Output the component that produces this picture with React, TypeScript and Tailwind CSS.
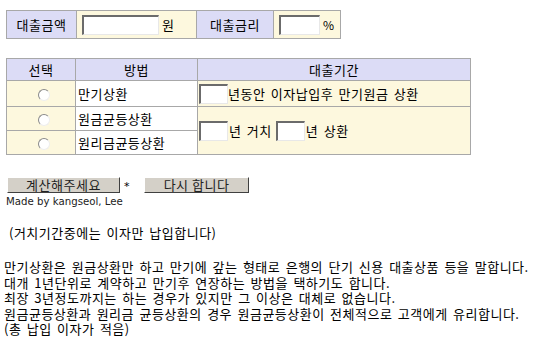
import React from 'react';

function Box({ w, h = 20 }: { w: number; h?: number }) {
  return (
    <span
      className="inline-block align-middle bg-white border-t-2 border-l-2 border-r border-b border-t-[#6b6b6b] border-l-[#6b6b6b] border-r-[#e8e8e8] border-b-[#e8e8e8]"
      style={{ width: w, height: h }}
    />
  );
}

function Radio() {
  return (
    <span className="inline-block w-[12px] h-[12px] ml-[5px] rounded-full bg-white border border-t-[#8a8a8a] border-l-[#8a8a8a] border-r-[#eeeeee] border-b-[#eeeeee] align-middle" />
  );
}

export default function App() {
  return (
    <div className="w-[537px] h-[350px] overflow-hidden bg-white text-black text-[13px] leading-[15px] tracking-[0.5px] [word-spacing:2px] font-['Noto_Sans_CJK_KR',sans-serif]">
      {/* 대출금액 / 대출금리 */}
      <table className="ml-[6px] mt-[10px] border-collapse border border-[#9a9a9a]">
        <tbody>
          <tr className="h-[28px]">
            <td className="w-[70px] bg-[#dcdcf6] text-center border border-[#a8a8a8]">대출금액</td>
            <td className="w-[120px] bg-[#fdf8de] border border-[#a8a8a8] pl-[5px]">
              <div className="flex items-center gap-[3px]">
                <Box w={77} />
                <span>원</span>
              </div>
            </td>
            <td className="w-[77px] bg-[#dcdcf6] text-center border border-[#a8a8a8]">대출금리</td>
            <td className="w-[67px] bg-[#fdf8de] border border-[#a8a8a8] pl-[5px]">
              <div className="flex items-center gap-[3px]">
                <Box w={41} />
                <span className="text-[12px]">%</span>
              </div>
            </td>
          </tr>
        </tbody>
      </table>

      {/* 상환 방법 */}
      <table className="ml-[6px] mt-[19px] border-collapse border border-[#9a9a9a]">
        <tbody>
          <tr className="h-[22px]">
            <td className="w-[69px] bg-[#dcdcf6] text-center border border-[#a8a8a8]">선택</td>
            <td className="w-[122px] bg-[#dcdcf6] text-center border border-[#a8a8a8]">방법</td>
            <td className="w-[273px] bg-[#dcdcf6] text-center border border-[#a8a8a8]">대출기간</td>
          </tr>
          <tr className="h-[26px]">
            <td className="bg-[#fdf8de] text-center border border-[#a8a8a8]"><Radio /></td>
            <td className="bg-white border border-[#a8a8a8] pl-[2px]">만기상환</td>
            <td className="bg-[#fdf8de] border border-[#a8a8a8] pl-[1px]">
              <div className="flex items-center">
                <Box w={29} />
                <span>년동안 이자납입후 만기원금 상환</span>
              </div>
            </td>
          </tr>
          <tr className="h-[24px]">
            <td className="bg-[#fdf8de] text-center border border-[#a8a8a8]"><Radio /></td>
            <td className="bg-white border border-[#a8a8a8] pl-[2px]">원금균등상환</td>
            <td rowSpan={2} className="bg-[#fdf8de] border border-[#a8a8a8] pl-[1px]">
              <div className="flex items-center">
                <Box w={29} />
                <span className="ml-[1px]">년 거치</span>
                <span className="ml-[4px]"><Box w={29} /></span>
                <span className="ml-[1px]">년 상환</span>
              </div>
            </td>
          </tr>
          <tr className="h-[24px]">
            <td className="bg-[#fdf8de] text-center border border-[#a8a8a8]"><Radio /></td>
            <td className="bg-white border border-[#a8a8a8] pl-[2px]">원리금균등상환</td>
          </tr>
        </tbody>
      </table>

      {/* 버튼 */}
      <div className="ml-[7px] mt-[20px] flex items-center">
        <button className="w-[113px] h-[16px] bg-[#d4d0c8] text-[13px] leading-[14px] text-[#222] border border-t-white border-l-white border-r-[#404040] border-b-[#404040]">
          계산해주세요
        </button>
        <span className="ml-[4px] mt-[4px] text-[11px] font-['DejaVu_Sans',sans-serif]">*</span>
        <button className="ml-[14px] w-[105px] h-[16px] bg-[#d4d0c8] text-[13px] leading-[14px] text-[#222] border border-t-white border-l-white border-r-[#404040] border-b-[#404040]">
          다시 합니다
        </button>
      </div>
      <div className="ml-[6px] mt-[1px] text-[10.2px] leading-[13px] tracking-normal [word-spacing:0px] text-[#222] font-['DejaVu_Sans',sans-serif]">
        Made by kangseol, Lee
      </div>

      <p className="ml-[9px] mt-[17px]">(거치기간중에는 이자만 납입합니다)</p>

      <div className="ml-[4px] mt-[19px] leading-[15.5px]">
        <p>만기상환은 원금상환만 하고 만기에 갚는 형태로 은행의 단기 신용 대출상품 등을 말합니다.</p>
        <p>대개 1년단위로 계약하고 만기후 연장하는 방법을 택하기도 합니다.</p>
        <p>최장 3년정도까지는 하는 경우가 있지만 그 이상은 대체로 없습니다.</p>
        <p>원금균등상환과 원리금 균등상환의 경우 원금균등상환이 전체적으로 고객에게 유리합니다.</p>
        <p>(총 납입 이자가 적음)</p>
      </div>
    </div>
  );
}
